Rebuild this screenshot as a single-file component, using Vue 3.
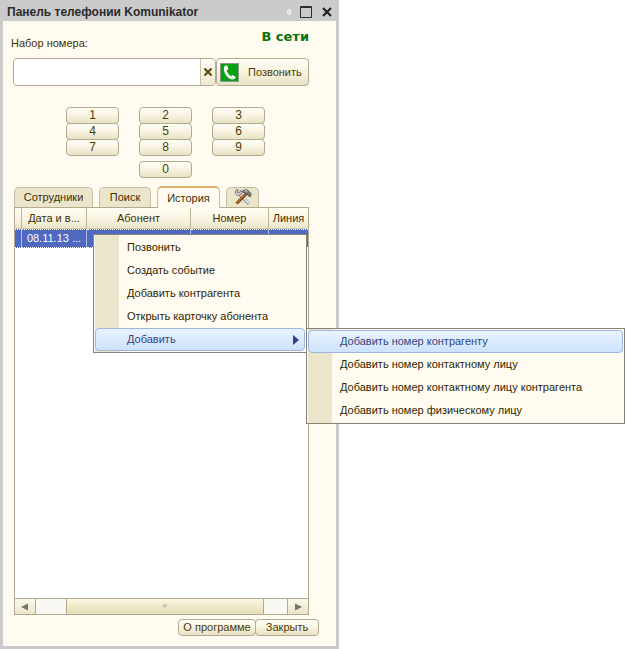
<script setup>
import { ref } from 'vue'

const number = ref('')
const keys = ['1', '2', '3', '4', '5', '6', '7', '8', '9', '0']
const menu = ['Позвонить', 'Создать событие', 'Добавить контрагента', 'Открыть карточку абонента', 'Добавить']
const submenu = [
  'Добавить номер контрагенту',
  'Добавить номер контактному лицу',
  'Добавить номер контактному лицу контрагента',
  'Добавить номер физическому лицу',
]
</script>

<template>
  <div class="page">
    <main class="window">
      <header class="titlebar">
        <h1>Панель телефонии Komunikator</h1>
        <span class="pin"></span>
        <button class="win-btn" aria-label="Развернуть">
          <svg width="12" height="12" viewBox="0 0 12 12"><path d="M.5 .5h11v11H.5z M1 1.500h10" fill="none" stroke="#2b2b2b" /></svg>
        </button>
        <button class="win-btn" aria-label="Закрыть окно">
          <svg width="12" height="12" viewBox="0 0 12 12"><path d="M2 2l8 8M10 2l-8 8" fill="none" stroke="#222" stroke-width="2.2" /></svg>
        </button>
      </header>

      <div class="content">
        <div class="top">
          <label for="number">Набор номера:</label>
          <strong>В сети</strong>
        </div>
        <div class="dial">
          <div class="field">
            <input id="number" v-model="number" type="text" />
            <button class="clear" aria-label="Очистить" @click="number = ''">
              <svg width="10" height="10" viewBox="0 0 10 10"><path d="M1.5 1.5l7 7M8.500 1.500l-7 7" stroke="#5a4508" stroke-width="2" /></svg>
            </button>
          </div>
          <button class="btn call">
            <svg width="19" height="19" viewBox="0 0 19 19">
              <rect x=".5" y=".5" width="18" height="18" fill="#08a010" stroke="#8a9a8a" />
              <path d="M5 2.500C3.500 4 3.200 7 5 10.500C7 14.500 10 17 13.500 16.300C14.800 16 15.500 15 15.800 14L12.800 12L11 13.200C9.500 12.400 7.200 9.700 6.600 7.500L8.400 6.300L7.300 2.600Z" fill="#f4fff2" />
            </svg>
            <span>Позвонить</span>
          </button>
        </div>

        <div class="keypad">
          <button v-for="k in keys" :key="k" class="btn key" :class="{ zero: k === '0' }" @click="number += k">{{ k }}</button>
        </div>

        <nav class="tabs">
          <button class="tab staff">Сотрудники</button>
          <button class="tab search">Поиск</button>
          <button class="tab history active">История</button>
          <button class="tab tools" aria-label="Настройки">
            <svg width="18" height="18" viewBox="0 0 18 18" fill="none">
              <path d="M5.500 6.500L15 16" stroke="#8f8f8f" stroke-width="3" />
              <path d="M5.500 6L15 15.500" stroke="#ececec" stroke-width="1.500" />
              <path d="M2 2.200L1.300 5L3.500 7.500L6.500 7L7.800 4.500L6.500 2L5.500 4.800L3.500 4.500L4 1.500Z" fill="#d5d5d5" stroke="#6d6d6d" stroke-width=".9" />
              <path d="M12.500 5.500L2.500 15.500" stroke="#70340f" stroke-width="3" />
              <path d="M12 5.500L2.500 15" stroke="#c9742f" stroke-width="1.500" />
              <path d="M8 3.500Q10.500 .8 13.500 2L17 5.500L16.500 8.500L14.500 8L13.500 6.200L11.500 5.500Z" fill="#7c7f80" stroke="#3f4445" stroke-width=".9" />
              <path d="M10 3q2-1 3.500.5" stroke="#d8dcdc" />
            </svg>
          </button>
        </nav>

        <section class="list">
          <table>
            <colgroup><col class="c0" /><col class="c1" /><col class="c2" /><col class="c3" /><col /></colgroup>
            <thead>
              <tr><th></th><th>Дата и в...</th><th>Абонент</th><th>Номер</th><th>Линия</th></tr>
            </thead>
            <tbody>
              <tr><td></td><td>08.11.13 ...</td><td></td><td></td><td></td></tr>
            </tbody>
          </table>
          <div class="space"></div>
          <div class="scroll">
            <button class="arrow" aria-label="Влево"><svg width="8" height="8" viewBox="0 0 8 8"><path d="M0 4L7 .5v7z" fill="#77736a" /></svg></button>
            <div class="track"><div class="thumb"><i></i></div></div>
            <button class="arrow" aria-label="Вправо"><svg width="8" height="8" viewBox="0 0 8 8"><path d="M8 4L1 .5v7z" fill="#77736a" /></svg></button>
          </div>
        </section>

        <footer class="actions">
          <button class="btn about">О программе</button>
          <button class="btn close">Закрыть</button>
        </footer>
      </div>
    </main>

    <div class="menu main-menu" role="menu">
      <button v-for="(m, i) in menu" :key="m" role="menuitem" :class="{ hot: i === 4 }">
        <span>{{ m }}</span>
        <svg v-if="i === 4" width="6" height="10" viewBox="0 0 6 10"><path d="M0 0l6 5-6 5z" fill="#2f4388" /></svg>
      </button>
    </div>
    <div class="menu sub-menu" role="menu">
      <button v-for="(m, i) in submenu" :key="m" role="menuitem" :class="{ hot: i === 0 }"><span>{{ m }}</span></button>
    </div>
  </div>
</template>

<style>
body { background: #fff; }
</style>

<style scoped>
* { box-sizing: border-box; }
.page {
  position: relative;
  min-height: 100vh;
  display: flex;
  font: 11px/13px "Liberation Sans", Arial, sans-serif;
  color: #3f3003;
}
button, input { font: inherit; color: inherit; margin: 0; padding: 0; }
button { border: 0; background: none; white-space: nowrap; }
svg { display: block; flex: none; }
.window {
  width: 100%;
  max-width: 339px;
  display: flex;
  flex-direction: column;
  background: #fffbf0;
  border: 3px solid #cbcbcb;
  border-top: 0;
}
.titlebar {
  height: 21px;
  display: flex;
  align-items: center;
  gap: 9px;
  padding: 3px 3px 0 4px;
  background: #cbcbcb;
  color: #2b2b2b;
}
.titlebar h1 { flex: 1; margin: 0; font: bold 12px/14px "Liberation Sans", Arial, sans-serif; white-space: nowrap; }
.pin { width: 4px; height: 6px; border: 1px solid #f3f3f3; border-radius: 2px; background: #e0e0e0; }
.content { flex: 1; display: flex; flex-direction: column; padding: 8px 27px 10px 11px; }
.top { display: flex; justify-content: space-between; height: 29px; }
.top label { align-self: center; margin-left: -3px; }
.top strong { font: bold 13px/16px "DejaVu Sans", sans-serif; color: #0b720b; }
.dial { display: flex; height: 28px; margin-left: -1px; }
.field { flex: 1; display: flex; min-width: 0; border: 1px solid #b1aa8c; border-radius: 4px; background: #fff; overflow: hidden; }
.field input { flex: 1; min-width: 0; border: 0; outline: 0; background: none; padding: 0 4px; }
.clear { width: 15px; display: flex; align-items: center; justify-content: center; border-left: 1px solid #c9c3a8; background: linear-gradient(#fffdf5, #efe9d0); }
.btn {
  border: 1px solid #b1aa8c;
  border-radius: 4px;
  background: linear-gradient(#fffef8, #f7f3e0 50%, #e8e2c4);
  color: #4e3b04;
}
.call { width: 93px; display: flex; align-items: center; gap: 9px; padding-left: 3px; }
.keypad {
  display: grid;
  grid-template-columns: 53px 53px 53px;
  grid-auto-rows: 16px;
  column-gap: 20px;
  margin: 21px 0 0 52px;
}
.key { height: 17px; line-height: 15px; font-size: 12px; }
.zero { grid-column: 2; margin-top: 6px; }
.tabs { display: flex; align-items: flex-end; gap: 6px; height: 21px; margin-top: 15px; position: relative; z-index: 1; }
.tab { height: 20px; border: 1px solid #c4bd9f; border-bottom: 0; border-radius: 5px 5px 0 0; background: #ebe5cb; }
.staff { width: 79px; }
.search { width: 52px; }
.history { width: 63px; }
.tools { width: 33px; display: flex; justify-content: center; }
.tab.active { height: 22px; margin-bottom: -1px; border-top: 2px solid #dfb06a; background: #fffbf0; }
.list { flex: 1; display: flex; flex-direction: column; border: 1px solid #b1aa8c; background: #fff; }
table { width: 100%; table-layout: fixed; border-collapse: separate; border-spacing: 0; }
.c0 { width: 7px; }
.c1 { width: 65px; }
.c2 { width: 104px; }
.c3 { width: 78px; }
th, td { padding: 0; font-weight: normal; white-space: nowrap; overflow: hidden; text-align: center; border-right: 1px solid #bdb698; }
th { height: 21px; background: linear-gradient(#fffcf2, #f8f3e0 60%, #ece5ca); border-bottom: 1px solid #d2cbae; }
td { height: 19px; background: #4f68c0; color: #fff; border-right-color: #b5c0e6; border-top: 1px dotted #fff; border-bottom: 1px dotted #fff; }
th:last-child, td:last-child { border-right: 0; }
.space { flex: 1; }
.scroll { display: flex; height: 16px; border-top: 1px solid #b1aa8c; background: #faf8f3; }
.arrow { width: 21px; display: flex; align-items: center; justify-content: center; border-right: 1px solid #b1aa8c; background: linear-gradient(#fbf8ea, #ebe5c8); }
.arrow:last-child { border-right: 0; border-left: 1px solid #b1aa8c; }
.track { flex: 1; display: flex; padding: 0 23px 0 30px; }
.thumb { flex: 1; display: flex; align-items: center; justify-content: center; border: solid #b1aa8c; border-width: 0 1px; background: linear-gradient(#fbf8e6, #ece6c4 60%, #e6dfba); }
.thumb i { width: 5px; height: 5px; border-radius: 50%; background: linear-gradient(135deg, #aaa386, #fff); }
.actions { display: flex; justify-content: flex-end; margin: 4px -10px 0 0; }
.actions .btn { height: 17px; line-height: 15px; }
.about { width: 78px; }
.close { width: 64px; margin-left: -1px; }
.menu {
  position: absolute;
  z-index: 2;
  display: flex;
  flex-direction: column;
  padding: 1px;
  border: 1px solid #85837a;
  background: linear-gradient(#ebe5cb, #ebe5cb) 1px 0 / 24px 100% no-repeat #fffbf0;
}
.main-menu { left: 93px; top: 234px; width: 214px; }
.sub-menu { left: 306px; top: 328px; width: 319px; z-index: 3; }
.menu button { height: 23px; display: flex; align-items: center; justify-content: space-between; padding: 0 5px 0 31px; border: 1px solid transparent; border-radius: 4px; color: #2f2600; }
.menu button.hot { border-color: #9db8e0; background: linear-gradient(#e9f3ff, #cde2fc); color: #33447f; }
</style>
